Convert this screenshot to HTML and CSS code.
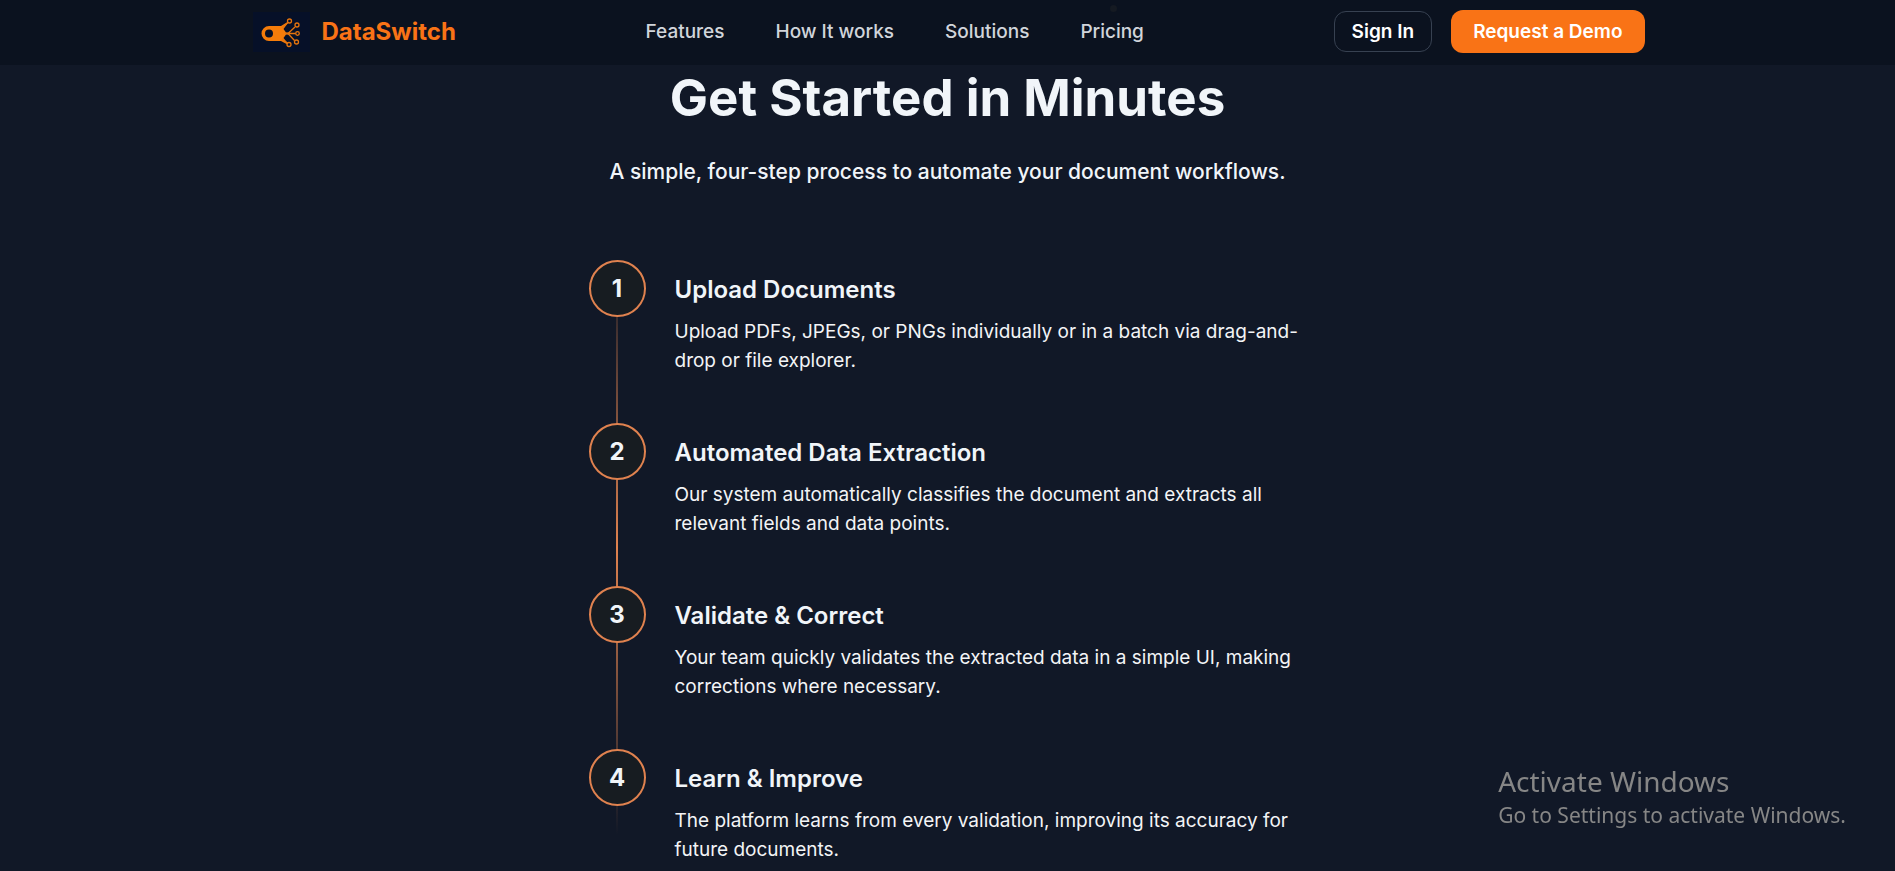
FILE: index.html
```html
<!DOCTYPE html>
<html lang="en">
<head>
    <meta charset="UTF-8">
    <meta name="viewport" content="width=device-width, initial-scale=1.0">
    <title>DataSwitch</title>
    <link rel="stylesheet" href="styles.css">
</head>
<body>
    <header class="header">
        <span class="particle"></span>
        <div class="container">
            <a href="#" class="logo">
                <svg class="logo-mark" viewBox="0 0 57 40" aria-hidden="true">
                    <rect width="57" height="40" fill="#061028"/>
                    <path fill="#f57c0a" fill-rule="evenodd" d="M16 14H28L34.500 10V11.500L30.500 17L33 20.500H36V22.500H33L30.500 26L34.500 31V32.500L28 29H16A7.500 7.500 0 0 1 16 14ZM16 17.500A4 4 0 1 0 16 25.500A4 4 0 1 0 16 17.500Z"/>
                    <g fill="none" stroke="#e5740d" stroke-width="1.300">
                        <path d="M29 16L35 10.500M35 21.500L42 15M32 21.500H42.500M35 21.500L41.500 28.500M29 27L35 31.500"/>
                        <circle cx="36.500" cy="9" r="2"/>
                        <circle cx="44" cy="13" r="2"/>
                        <circle cx="44.500" cy="21.500" r="1.800"/>
                        <circle cx="43.500" cy="30" r="2"/>
                        <circle cx="36" cy="32.500" r="2"/>
                    </g>
                </svg>
                <span>DataSwitch</span>
            </a>
            <nav class="nav">
                <a href="#features">Features</a>
                <a href="#how-it-works">How It works</a>
                <a href="#solutions">Solutions</a>
                <a href="#pricing">Pricing</a>
            </nav>
            <div class="actions">
                <button class="btn btn-outline">Sign In</button>
                <button class="btn btn-primary">Request a Demo</button>
            </div>
        </div>
    </header>

    <main class="how-it-works" id="how-it-works">
        <h1>Get Started in Minutes</h1>
        <p class="subtitle">A simple, four-step process to automate your document workflows.</p>

        <ol class="steps">
            <li class="step">
                <span class="step-number">1</span>
                <div class="step-content">
                    <h2>Upload Documents</h2>
                    <p>Upload PDFs, JPEGs, or PNGs individually or in a batch via drag-and-drop or file explorer.</p>
                </div>
            </li>
            <li class="step">
                <span class="step-number">2</span>
                <div class="step-content">
                    <h2>Automated Data Extraction</h2>
                    <p>Our system automatically classifies the document and extracts all relevant fields and data points.</p>
                </div>
            </li>
            <li class="step">
                <span class="step-number">3</span>
                <div class="step-content">
                    <h2>Validate &amp; Correct</h2>
                    <p>Your team quickly validates the extracted data in a simple UI, making corrections where necessary.</p>
                </div>
            </li>
            <li class="step">
                <span class="step-number">4</span>
                <div class="step-content">
                    <h2>Learn &amp; Improve</h2>
                    <p>The platform learns from every validation, improving its accuracy for future documents.</p>
                </div>
            </li>
        </ol>
    </main>

    <aside class="watermark">
        <p class="watermark-title">Activate Windows</p>
        <p>Go to Settings to activate Windows.</p>
    </aside>
</body>
</html>
```
FILE: styles.css
```css
* {
    margin: 0;
    padding: 0;
    box-sizing: border-box;
}

body {
    background-color: #111827;
    color: #f1f5f9;
    font-family: Inter, "Liberation Sans", sans-serif;
}

.header {
    position: sticky;
    top: 0;
    z-index: 10;
    background-color: #0b121f;
}

.container {
    display: flex;
    align-items: center;
    justify-content: space-between;
    max-width: 1440px;
    height: 65px;
    margin: 0 auto;
    padding: 0 23px 2px 25px;
}

.particle {
    position: absolute;
    top: 5px;
    left: 58.6%;
    width: 7px;
    height: 7px;
    border-radius: 50%;
    background-color: #151a22;
}

.logo {
    display: flex;
    align-items: center;
    gap: 12px;
    color: #f97316;
    font-size: 24px;
    font-weight: 700;
    text-decoration: none;
}

.logo-mark {
    width: 57px;
    height: 40px;
}

.nav {
    display: flex;
    gap: 51px;
}

.nav a {
    color: #d1d5db;
    font-size: 19px;
    font-weight: 500;
    text-decoration: none;
}

.actions {
    display: flex;
    align-items: center;
    gap: 19px;
}

.btn {
    border: none;
    border-radius: 12px;
    color: white;
    font-family: inherit;
    font-size: 19px;
    font-weight: 600;
    cursor: pointer;
}

.btn-outline {
    height: 41px;
    padding: 0 17px;
    border: 1px solid #374151;
    background: none;
}

.btn-primary {
    height: 43px;
    padding: 0 22px;
    background-color: #f97316;
}

.how-it-works {
    max-width: 718px;
    margin: 0 auto;
    padding: 4px 0 40px;
}

h1 {
    font-size: 51px;
    line-height: 58px;
    font-weight: 700;
    text-align: center;
}

.subtitle {
    margin: 28px 0 71px;
    font-size: 21px;
    line-height: 34px;
    font-weight: 500;
    text-align: center;
}

.steps {
    position: relative;
    display: flex;
    flex-direction: column;
    gap: 48px;
    list-style: none;
}

/* vertical line running behind the numbers */
.steps::before {
    content: "";
    position: absolute;
    top: 0;
    bottom: 29px;
    left: 27px;
    width: 2px;
    background: linear-gradient(to bottom, transparent, #e0824f, transparent);
}

.step {
    display: flex;
    gap: 29px;
}

.step-number {
    position: relative;
    display: flex;
    flex-shrink: 0;
    align-items: center;
    justify-content: center;
    width: 57px;
    height: 57px;
    border: 2px solid #e0824f;
    border-radius: 50%;
    background-color: #171c21;
    font-size: 24px;
    font-weight: 700;
}

.step-content {
    padding-top: 12px;
}

.step h2 {
    margin-bottom: 10px;
    font-size: 24px;
    line-height: 35px;
    font-weight: 600;
}

.step p {
    color: #f3f4f6;
    font-size: 19px;
    line-height: 29px;
}

.watermark {
    position: fixed;
    right: 49px;
    bottom: 41px;
    color: #868686;
    font-family: "Noto Sans", "Open Sans", sans-serif;
    font-size: 21px;
    line-height: 30px;
}

.watermark-title {
    font-size: 28px;
    line-height: 38px;
}
```
